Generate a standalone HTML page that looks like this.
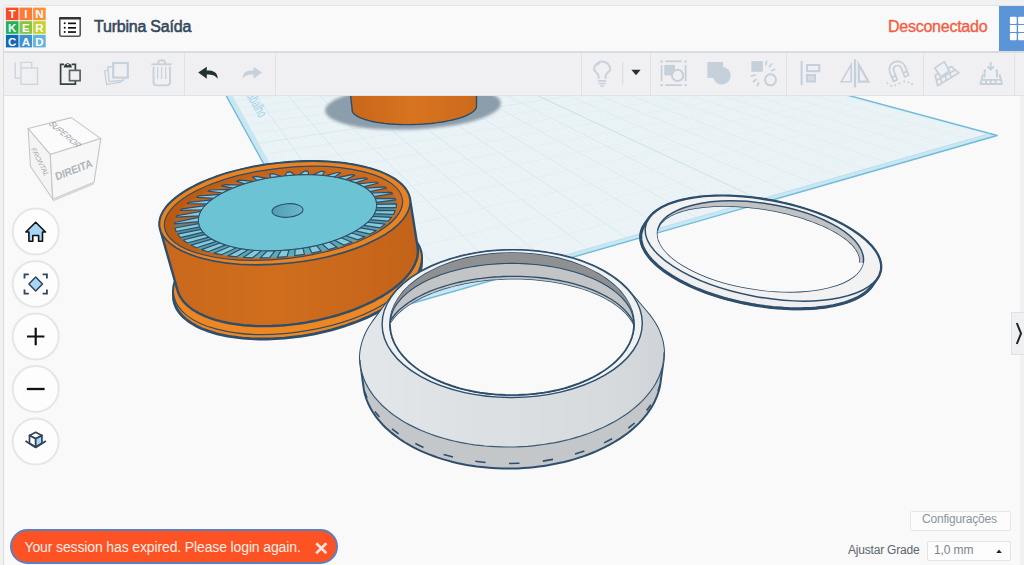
<!DOCTYPE html>
<html><head><meta charset="utf-8">
<style>
*{margin:0;padding:0;box-sizing:border-box}
html,body{width:1024px;height:565px;overflow:hidden;background:#f1f1f1;font-family:"Liberation Sans",sans-serif;position:relative}
.abs{position:absolute}
#canvas{position:absolute;left:3px;top:95px;width:1021px;height:470px;background:#f9f9f9;border-left:1px solid #dcdcdc}
#header{position:absolute;left:3px;top:5px;width:1021px;height:48px;background:#f9f9f9;border-left:1px solid #dcdcdc;border-top:1px solid #e3e3e3;border-bottom:2px solid #d9dce1;border-top-left-radius:5px}
#toolbar{position:absolute;left:3px;top:53px;width:1021px;height:43px;background:#f0f0f2;border-left:1px solid #dcdcdc;border-bottom:1px solid #dfe4e8}
.logo div{position:absolute;width:13px;height:13px;color:#fff;font-weight:bold;font-size:12px;line-height:14px;text-align:center}
#title{position:absolute;left:94px;top:18px;font-size:16px;font-weight:normal;color:#34485c;letter-spacing:-0.22px;white-space:nowrap;-webkit-text-stroke:0.55px #34485c}
#disc{position:absolute;left:888px;top:18px;font-size:16px;color:#f45d45;letter-spacing:-0.25px;white-space:nowrap;-webkit-text-stroke:0.35px #f45d45}
#blue{position:absolute;left:999px;top:6px;width:25px;height:45px;background:#5b95d8}
.dv{position:absolute;top:53px;width:1px;height:42px;background:#dde2e7}
.navbtn{position:absolute;left:12px;width:48px;height:48px;border-radius:50%;background:#fcfcfc;border:2px solid #e7e7e7}
</style></head>
<body>
<div id="canvas"></div>
<div id="header"></div>
<div id="toolbar"></div>
<svg class="abs" style="left:0;top:0" width="50" height="52" viewBox="0 0 50 52">
 <g>
  <rect x="5.9" y="7.6" width="12.6" height="12.6" fill="#fb4a25"/>
  <rect x="19.5" y="7.6" width="12.6" height="12.6" fill="#fd7b38"/>
  <rect x="33.1" y="7.6" width="12.6" height="12.6" fill="#fe8f3c"/>
  <rect x="5.9" y="21.2" width="12.6" height="12.6" fill="#21b25a"/>
  <rect x="19.5" y="21.2" width="12.6" height="12.6" fill="#87c540"/>
  <rect x="33.1" y="21.2" width="12.6" height="12.6" fill="#c4d22e"/>
  <rect x="5.9" y="34.8" width="12.6" height="12.6" fill="#0f6ab6"/>
  <rect x="19.5" y="34.8" width="12.6" height="12.6" fill="#3e92cf"/>
  <rect x="33.1" y="34.8" width="12.6" height="12.6" fill="#64b4e0"/>
 </g>
 <g fill="#fff" font-family="Liberation Sans" font-weight="bold" font-size="11.5" text-anchor="middle">
  <text x="12.2" y="18.3">T</text><text x="25.8" y="18.3">I</text><text x="39.4" y="18.3">N</text>
  <text x="12.2" y="31.9">K</text><text x="25.8" y="31.9">E</text><text x="39.4" y="31.9">R</text>
  <text x="12.2" y="45.5">C</text><text x="25.8" y="45.5">A</text><text x="39.4" y="45.5">D</text>
 </g>
</svg>
<svg class="abs" style="left:58px;top:16px" width="24" height="22" viewBox="0 0 24 22">
  <rect x="1.8" y="1.8" width="20.4" height="18.4" rx="1.5" fill="#fff" stroke="#555" stroke-width="1.6"/>
  <rect x="1" y="1" width="22" height="2.4" rx="1" fill="#333"/>
  <circle cx="6.7" cy="7.3" r="1" fill="#111"/><circle cx="6.7" cy="11.8" r="1" fill="#111"/><circle cx="6.7" cy="16" r="1" fill="#111"/>
  <rect x="10" y="6.5" width="8" height="1.7" fill="#111"/><rect x="10" y="11" width="8" height="1.7" fill="#111"/><rect x="10" y="15.2" width="8" height="1.7" fill="#111"/>
</svg>
<div id="title">Turbina Saída</div>
<div id="disc">Desconectado</div>
<div id="blue"></div>
<svg class="abs" style="left:1008px;top:15px" width="16" height="27" viewBox="1008 15 16 27"><g fill="#fff">
 <rect x="1009.9" y="16.8" width="6.8" height="7.2" rx="1"/><rect x="1018.1" y="16.8" width="6.8" height="7.2" rx="1"/>
 <rect x="1009.9" y="24.9" width="6.8" height="7" rx="0.6"/><rect x="1018.1" y="24.9" width="6.8" height="7" rx="0.6"/>
 <rect x="1009.9" y="32.9" width="6.8" height="7.3" rx="1"/><rect x="1018.1" y="32.9" width="6.8" height="7.3" rx="1"/>
</g></svg>


<svg id="scenesvg" class="abs" style="left:0;top:0" width="1024" height="565" viewBox="0 0 1024 565"><defs></defs><g clip-path="url(#canvasclip)"><clipPath id="canvasclip"><rect x="4" y="96" width="1016" height="469"/></clipPath><path d="M206.5,60.0 L350.2,321.0 L997.2,135.5 L717.0,60.0Z" fill="#c9e6f2"/>
<path d="M213.0,60.0 L353.8,315.8 L989.6,133.5 L717.0,60.0Z" fill="#ebf3f6"/>
<clipPath id="wpc"><path d="M213.0,60.0 L353.8,315.8 L989.6,133.5 L717.0,60.0Z"/></clipPath>
<linearGradient id="gfade" gradientUnits="userSpaceOnUse" x1="420" y1="300" x2="880" y2="40"><stop offset="0" stop-color="#fff"/><stop offset="1" stop-color="#555"/></linearGradient><mask id="gmask" maskUnits="userSpaceOnUse" x="0" y="0" width="1024" height="565"><rect x="0" y="0" width="1024" height="565" fill="url(#gfade)"/></mask>
<g clip-path="url(#wpc)" mask="url(#gmask)" fill="none"><path d="M351.1,311.1 L988.6,133.2 M347.8,305.3 L981.7,131.3 M344.7,299.6 L975.0,129.5 M338.6,288.8 L961.8,126.0 M335.6,283.7 L955.3,124.2 M332.8,278.6 L949.0,122.5 M330.0,273.7 L942.7,120.8 M324.6,264.2 L930.5,117.6 M322.1,259.7 L924.5,115.9 M319.5,255.2 L918.7,114.4 M317.1,250.9 L912.9,112.8 M312.4,242.6 L901.5,109.7 M310.1,238.5 L895.9,108.3 M307.9,234.6 L890.5,106.8 M305.7,230.7 L885.0,105.3 M301.5,223.3 L874.5,102.5 M299.4,219.7 L869.3,101.1 M297.5,216.2 L864.2,99.7 M295.5,212.8 L859.1,98.4 M291.7,206.1 L849.2,95.7 M289.9,202.9 L844.4,94.4 M288.1,199.7 L839.6,93.1 M286.4,196.6 L834.9,91.8 M283.0,190.6 L825.6,89.3 M281.3,187.7 L821.1,88.1 M279.7,184.9 L816.6,86.9 M278.1,182.1 L812.2,85.7 M275.1,176.6 L803.5,83.4 M273.6,174.0 L799.3,82.2 M272.1,171.4 L795.1,81.1 M270.7,168.9 L790.9,80.0 M267.9,163.9 L782.7,77.8 M266.5,161.5 L778.7,76.7 M265.2,159.2 L774.8,75.7 M263.9,156.8 L770.9,74.6 M261.3,152.3 L763.2,72.5 M260.1,150.1 L759.4,71.5 M258.8,148.0 L755.7,70.5 M257.6,145.8 L752.0,69.5 M255.3,141.7 L744.7,67.6 M254.2,139.7 L741.2,66.6 M253.0,137.7 L737.7,65.7 M251.9,135.7 L734.2,64.7 M249.8,131.9 L727.3,62.9 M248.7,130.1 L724.0,62.0 M247.7,128.2 L720.6,61.1 M246.7,126.4 L717.3,60.2 M244.7,122.9 L710.8,58.5 M243.7,121.2 L707.7,57.6 M242.7,119.5 L704.5,56.8 M241.8,117.8 L701.4,55.9 M240.0,114.6 L695.2,54.3 M239.1,113.0 L692.2,53.5 M238.2,111.4 L689.2,52.7 M237.3,109.9 L686.3,51.9 M235.6,106.8 L680.4,50.3 M234.7,105.3 L677.6,49.5 M233.9,103.9 L674.7,48.8 M233.1,102.4 L671.9,48.0 M231.5,99.6 L666.4,46.5 M230.7,98.2 L663.6,45.8 M230.0,96.9 L660.9,45.0 M229.2,95.5 L658.3,44.3 M227.7,92.9 L653.0,42.9 M227.0,91.6 L650.4,42.2 M226.2,90.3 L647.8,41.5 M225.5,89.1 L645.3,40.8 M224.1,86.6 L640.2,39.5 M223.5,85.4 L637.8,38.8 M222.8,84.2 L635.3,38.2 M222.1,83.0 L632.9,37.5 M220.8,80.7 L628.1,36.2 M220.2,79.6 L625.7,35.6 M219.5,78.5 L623.4,34.9 M218.9,77.4 L621.1,34.3 M217.7,75.2 L616.5,33.1 M217.1,74.1 L614.2,32.5 M216.5,73.1 L612.0,31.9 M215.9,72.0 L609.8,31.3" stroke="#e8f2f5" stroke-width="0.4"/><path d="M357.3,314.8 L216.2,69.6 M368.7,311.6 L221.3,69.1 M379.9,308.4 L226.5,68.6 M390.9,305.3 L231.6,68.1 M412.5,299.2 L241.6,67.0 M423.0,296.2 L246.6,66.5 M433.4,293.3 L251.6,66.0 M443.6,290.4 L256.5,65.5 M463.6,284.7 L266.3,64.5 M473.4,282.0 L271.1,64.0 M483.0,279.2 L275.9,63.5 M492.5,276.6 L280.7,63.0 M511.1,271.3 L290.2,62.1 M520.2,268.7 L294.9,61.6 M529.2,266.2 L299.5,61.1 M538.0,263.7 L304.2,60.7 M555.3,258.8 L313.3,59.7 M563.8,256.4 L317.9,59.3 M572.1,254.0 L322.4,58.8 M580.4,251.7 L326.9,58.3 M596.6,247.1 L335.8,57.4 M604.5,244.9 L340.2,57.0 M612.3,242.7 L344.6,56.5 M620.0,240.5 L348.9,56.1 M635.1,236.2 L357.6,55.2 M642.6,234.1 L361.8,54.8 M649.9,232.1 L366.1,54.3 M657.1,230.0 L370.3,53.9 M671.3,226.0 L378.7,53.1 M678.3,224.0 L382.8,52.6 M685.2,222.1 L387.0,52.2 M692.0,220.2 L391.1,51.8 M705.3,216.4 L399.2,51.0 M711.8,214.5 L403.2,50.6 M718.3,212.7 L407.3,50.1 M724.7,210.9 L411.2,49.7 M737.3,207.3 L419.1,48.9 M743.5,205.6 L423.1,48.5 M749.6,203.9 L427.0,48.1 M755.6,202.2 L430.8,47.7 M767.4,198.8 L438.5,47.0 M773.3,197.2 L442.3,46.6 M779.0,195.5 L446.1,46.2 M784.7,193.9 L449.9,45.8 M795.9,190.7 L457.3,45.0 M801.4,189.2 L461.0,44.7 M806.9,187.7 L464.7,44.3 M812.2,186.1 L468.4,43.9 M822.8,183.1 L475.7,43.2 M828.1,181.7 L479.3,42.8 M833.2,180.2 L482.8,42.4 M838.3,178.8 L486.4,42.1 M848.4,175.9 L493.5,41.4 M853.3,174.5 L497.0,41.0 M858.2,173.1 L500.5,40.6 M863.0,171.8 L503.9,40.3 M872.6,169.1 L510.8,39.6 M877.3,167.7 L514.2,39.2 M881.9,166.4 L517.6,38.9 M886.5,165.1 L521.0,38.6 M895.6,162.6 L527.7,37.9 M900.0,161.3 L531.0,37.5 M904.5,160.0 L534.3,37.2 M908.8,158.8 L537.6,36.9 M917.4,156.4 L544.2,36.2 M921.7,155.2 L547.4,35.9 M925.9,154.0 L550.6,35.5 M930.1,152.8 L553.8,35.2 M938.3,150.5 L560.2,34.6 M942.3,149.3 L563.3,34.2 M946.3,148.2 L566.5,33.9 M950.3,147.1 L569.6,33.6 M958.1,144.9 L575.8,33.0 M962.0,143.8 L578.9,32.7 M965.8,142.7 L581.9,32.3 M969.6,141.6 L585.0,32.0 M977.1,139.5 L591.0,31.4 M980.8,138.5 L594.0,31.1 M984.4,137.4 L597.0,30.8 M988.1,136.4 L600.0,30.5" stroke="#e2eff4" stroke-width="0.5"/><path d="M341.6,294.2 L968.3,127.7 M327.3,268.9 L936.6,119.2 M314.7,246.7 L907.1,111.3 M303.6,227.0 L879.7,103.9 M293.6,209.4 L854.1,97.0 M284.7,193.6 L830.2,90.6 M276.6,179.3 L807.8,84.6 M269.3,166.4 L786.8,78.9 M262.6,154.6 L767.0,73.6 M250.8,133.8 L730.7,63.8 M245.7,124.7 L714.1,59.3 M240.9,116.2 L698.3,55.1 M236.4,108.3 L683.3,51.1 M232.3,101.0 L669.1,47.2 M228.4,94.2 L655.6,43.6 M224.8,87.8 L642.7,40.1 M221.5,81.9 L630.5,36.9 M218.3,76.3 L618.8,33.7 M215.3,71.0 L607.6,30.7" stroke="#dcecf2" stroke-width="0.7"/><path d="M401.8,302.2 L236.6,67.5 M453.7,287.5 L261.4,65.0 M501.9,273.9 L285.5,62.6 M546.7,261.2 L308.8,60.2 M588.5,249.4 L331.3,57.9 M627.6,238.4 L353.3,55.7 M664.3,228.0 L374.5,53.5 M698.7,218.3 L395.2,51.4 M731.0,209.1 L415.2,49.3 M790.3,192.3 L453.6,45.4 M817.6,184.6 L472.0,43.5 M843.4,177.3 L490.0,41.7 M867.8,170.4 L507.4,39.9 M891.1,163.8 L524.4,38.2 M913.2,157.6 L540.9,36.5 M934.2,151.6 L557.0,34.9 M954.2,146.0 L572.7,33.3 M973.4,140.6 L588.0,31.7 M991.7,135.4 L602.9,30.2" stroke="#d0e6ee" stroke-width="0.9"/><path d="M256.5,143.7 L748.3,68.6" stroke="#d2e8f0" stroke-width="0.8"/><path d="M761.5,200.5 L434.7,47.4" stroke="#bcdce8" stroke-width="1.1"/></g>
<text font-family="Liberation Sans" font-size="12" fill="#a6d5e8" text-anchor="end" transform="translate(259,118.5) rotate(61.2) scale(0.72,1.2)">Plano de trabalho</text>
<path d="M206.5,60.0 L350.2,321.0 L997.2,135.5 L717.0,60.0" fill="none" stroke="#6dbbdd" stroke-width="1.4" stroke-linejoin="round"/>
<path d="M353.8,315.8 L989.6,133.5" fill="none" stroke="#b4dcec" stroke-width="0.8"/>
<filter id="blur1" x="-20%" y="-50%" width="140%" height="200%"><feGaussianBlur stdDeviation="1.6"/></filter>
<ellipse cx="413" cy="107" rx="88" ry="22.5" transform="rotate(-2.5 413 107)" fill="#8c9dab" filter="url(#blur1)"/>
<linearGradient id="og" x1="0" x2="1" y1="0" y2="0"><stop offset="0" stop-color="#c8661b"/><stop offset="0.5" stop-color="#d8741f"/><stop offset="1" stop-color="#cc6a1c"/></linearGradient>
<path d="M350,90 L352.2,110.0 L352.1,110.0 L352.2,110.8 L352.5,111.7 L353.0,112.6 L353.6,113.4 L354.5,114.2 L355.4,115.0 L356.6,115.8 L357.9,116.6 L359.4,117.3 L361.0,118.1 L362.8,118.7 L364.7,119.4 L366.8,120.0 L369.0,120.6 L371.3,121.2 L373.8,121.7 L376.3,122.2 L379.0,122.6 L381.8,123.0 L384.6,123.4 L387.6,123.7 L390.6,124.0 L393.7,124.2 L396.8,124.4 L400.0,124.5 L403.3,124.6 L406.6,124.6 L409.9,124.6 L413.2,124.5 L416.5,124.4 L419.8,124.3 L423.1,124.1 L426.3,123.8 L429.6,123.6 L432.7,123.2 L435.9,122.9 L439.0,122.4 L442.0,122.0 L444.9,121.5 L447.7,120.9 L450.5,120.4 L453.1,119.8 L455.6,119.1 L458.0,118.5 L460.3,117.8 L462.5,117.0 L464.5,116.3 L466.4,115.5 L468.1,114.7 L469.7,113.9 L471.1,113.0 L472.4,112.2 L473.5,111.3 L474.4,110.5 L475.2,109.6 L475.8,108.7 L476.2,107.8 L476.4,106.9 L476.5,106.0 L476.5,90 Z" fill="url(#og)" stroke="#2c4d69" stroke-width="1.4"/>
<clipPath id="sr_c"><path d="M658.3,231.0 L658.5,229.7 L658.9,228.4 L659.4,227.2 L660.1,226.0 L660.8,224.8 L661.7,223.6 L662.7,222.5 L663.9,221.4 L665.1,220.3 L666.5,219.3 L667.9,218.2 L669.5,217.3 L671.2,216.3 L673.0,215.4 L674.9,214.6 L677.0,213.8 L679.1,213.0 L681.3,212.2 L683.6,211.6 L686.0,210.9 L688.5,210.3 L691.1,209.7 L693.8,209.2 L696.5,208.8 L699.4,208.4 L702.3,208.0 L705.2,207.7 L708.3,207.4 L711.4,207.2 L714.5,207.0 L717.8,206.9 L721.0,206.8 L724.3,206.8 L727.7,206.8 L731.1,206.9 L734.5,207.0 L738.0,207.2 L741.5,207.4 L745.0,207.7 L748.5,208.0 L752.0,208.4 L755.6,208.8 L759.1,209.3 L762.7,209.8 L766.2,210.3 L769.7,211.0 L773.3,211.6 L776.8,212.3 L780.2,213.0 L783.7,213.8 L787.1,214.6 L790.5,215.5 L793.8,216.4 L797.1,217.3 L800.4,218.3 L803.6,219.3 L806.7,220.4 L809.8,221.5 L812.8,222.6 L815.8,223.7 L818.7,224.9 L821.5,226.1 L824.2,227.3 L826.9,228.5 L829.4,229.8 L831.9,231.1 L834.3,232.4 L836.6,233.7 L838.7,235.1 L840.8,236.5 L842.8,237.8 L844.7,239.2 L846.5,240.6 L848.2,242.0 L849.7,243.4 L851.2,244.8 L852.5,246.2 L853.7,247.7 L854.8,249.1 L855.8,250.5 L856.6,251.9 L857.3,253.3 L857.9,254.7 L858.4,256.1 L858.8,257.5 L859.0,258.8 L859.1,260.2 L859.1,261.5 L858.9,262.8 L958.9,262.8 L958.9,400.0 L558.3,400.0 L558.3,231.0Z"/></clipPath>
<mask id="sr_m" maskUnits="userSpaceOnUse" x="0" y="0" width="1024" height="565"><path d="M640.7,237.4 L640.7,235.6 L640.9,233.9 L641.2,232.2 L641.7,230.5 L642.3,228.8 L643.0,227.2 L644.0,225.6 L645.0,224.0 L649.4,217.8 L650.6,216.3 L651.9,214.9 L653.4,213.5 L654.9,212.1 L656.6,210.8 L658.5,209.6 L660.5,208.3 L662.5,207.2 L664.8,206.1 L667.1,205.0 L669.6,204.0 L672.1,203.1 L674.8,202.2 L677.6,201.3 L680.5,200.6 L683.5,199.8 L686.6,199.2 L689.8,198.6 L693.1,198.0 L696.5,197.6 L700.0,197.1 L703.5,196.8 L707.1,196.5 L710.8,196.3 L714.5,196.1 L718.3,196.0 L722.1,196.0 L726.0,196.0 L730.0,196.1 L734.0,196.3 L738.0,196.5 L742.1,196.8 L746.1,197.2 L750.2,197.6 L754.4,198.1 L758.5,198.6 L762.6,199.2 L766.8,199.9 L770.9,200.6 L775.0,201.4 L779.1,202.3 L783.2,203.2 L787.3,204.1 L791.3,205.1 L795.3,206.2 L799.2,207.3 L803.1,208.5 L807.0,209.7 L810.8,211.0 L814.6,212.3 L818.3,213.6 L821.9,215.0 L825.4,216.5 L828.9,218.0 L832.3,219.5 L835.6,221.0 L838.8,222.6 L841.9,224.2 L844.9,225.9 L847.9,227.6 L850.7,229.3 L853.4,231.0 L856.0,232.7 L858.5,234.5 L860.8,236.3 L863.0,238.1 L865.2,239.9 L867.2,241.7 L869.0,243.6 L870.8,245.4 L872.4,247.2 L873.8,249.1 L875.2,250.9 L876.4,252.8 L877.4,254.6 L878.3,256.4 L879.1,258.2 L879.7,260.0 L880.2,261.8 L880.5,263.6 L880.8,265.4 L880.8,267.1 L880.7,268.8 L880.5,270.5 L880.1,272.1 L879.5,273.8 L878.9,275.4 L878.1,276.9 L877.1,278.5 L872.5,285.2 L871.4,286.8 L870.2,288.3 L868.8,289.7 L867.3,291.2 L865.6,292.5 L863.9,293.9 L861.9,295.2 L859.9,296.4 L857.7,297.6 L855.4,298.7 L853.0,299.8 L850.5,300.8 L847.9,301.8 L845.1,302.7 L842.2,303.5 L839.3,304.3 L836.2,305.0 L833.1,305.7 L829.8,306.3 L826.5,306.9 L823.1,307.3 L819.6,307.7 L816.0,308.1 L812.4,308.4 L808.6,308.6 L804.9,308.7 L801.0,308.8 L797.2,308.8 L793.2,308.8 L789.3,308.7 L785.2,308.5 L781.2,308.2 L777.1,307.9 L773.0,307.6 L768.9,307.1 L764.8,306.6 L760.7,306.0 L756.5,305.4 L752.4,304.7 L748.3,303.9 L744.2,303.1 L740.1,302.3 L736.0,301.3 L732.0,300.3 L727.9,299.3 L724.0,298.2 L720.0,297.0 L716.1,295.8 L712.3,294.6 L708.5,293.3 L704.8,291.9 L701.2,290.5 L697.6,289.1 L694.1,287.6 L690.7,286.1 L687.3,284.5 L684.1,282.9 L680.9,281.3 L677.9,279.6 L674.9,277.9 L672.0,276.2 L669.3,274.4 L666.6,272.6 L664.1,270.9 L661.7,269.0 L659.4,267.2 L657.2,265.4 L655.2,263.5 L653.2,261.6 L651.5,259.8 L649.8,257.9 L648.3,256.0 L646.9,254.1 L645.6,252.2 L644.5,250.3 L643.5,248.4 L642.7,246.6 L642.0,244.7 L641.5,242.9 L641.0,241.0 L640.8,239.2Z" fill="#fff" stroke="#fff" stroke-width="4"/><g clip-path="url(#sr_c)"><ellipse cx="760.5" cy="246.4" rx="104.0" ry="43.2" transform="rotate(8.60 760.5 246.4)" fill='#000'/></g></mask>
<g mask="url(#sr_m)">
<path d="M640.7,237.4 L640.7,235.6 L640.9,233.9 L641.2,232.2 L641.7,230.5 L642.3,228.8 L643.0,227.2 L644.0,225.6 L645.0,224.0 L649.4,217.8 L650.6,216.3 L651.9,214.9 L653.4,213.5 L654.9,212.1 L656.6,210.8 L658.5,209.6 L660.5,208.3 L662.5,207.2 L664.8,206.1 L667.1,205.0 L669.6,204.0 L672.1,203.1 L674.8,202.2 L677.6,201.3 L680.5,200.6 L683.5,199.8 L686.6,199.2 L689.8,198.6 L693.1,198.0 L696.5,197.6 L700.0,197.1 L703.5,196.8 L707.1,196.5 L710.8,196.3 L714.5,196.1 L718.3,196.0 L722.1,196.0 L726.0,196.0 L730.0,196.1 L734.0,196.3 L738.0,196.5 L742.1,196.8 L746.1,197.2 L750.2,197.6 L754.4,198.1 L758.5,198.6 L762.6,199.2 L766.8,199.9 L770.9,200.6 L775.0,201.4 L779.1,202.3 L783.2,203.2 L787.3,204.1 L791.3,205.1 L795.3,206.2 L799.2,207.3 L803.1,208.5 L807.0,209.7 L810.8,211.0 L814.6,212.3 L818.3,213.6 L821.9,215.0 L825.4,216.5 L828.9,218.0 L832.3,219.5 L835.6,221.0 L838.8,222.6 L841.9,224.2 L844.9,225.9 L847.9,227.6 L850.7,229.3 L853.4,231.0 L856.0,232.7 L858.5,234.5 L860.8,236.3 L863.0,238.1 L865.2,239.9 L867.2,241.7 L869.0,243.6 L870.8,245.4 L872.4,247.2 L873.8,249.1 L875.2,250.9 L876.4,252.8 L877.4,254.6 L878.3,256.4 L879.1,258.2 L879.7,260.0 L880.2,261.8 L880.5,263.6 L880.8,265.4 L880.8,267.1 L880.7,268.8 L880.5,270.5 L880.1,272.1 L879.5,273.8 L878.9,275.4 L878.1,276.9 L877.1,278.5 L872.5,285.2 L871.4,286.8 L870.2,288.3 L868.8,289.7 L867.3,291.2 L865.6,292.5 L863.9,293.9 L861.9,295.2 L859.9,296.4 L857.7,297.6 L855.4,298.7 L853.0,299.8 L850.5,300.8 L847.9,301.8 L845.1,302.7 L842.2,303.5 L839.3,304.3 L836.2,305.0 L833.1,305.7 L829.8,306.3 L826.5,306.9 L823.1,307.3 L819.6,307.7 L816.0,308.1 L812.4,308.4 L808.6,308.6 L804.9,308.7 L801.0,308.8 L797.2,308.8 L793.2,308.8 L789.3,308.7 L785.2,308.5 L781.2,308.2 L777.1,307.9 L773.0,307.6 L768.9,307.1 L764.8,306.6 L760.7,306.0 L756.5,305.4 L752.4,304.7 L748.3,303.9 L744.2,303.1 L740.1,302.3 L736.0,301.3 L732.0,300.3 L727.9,299.3 L724.0,298.2 L720.0,297.0 L716.1,295.8 L712.3,294.6 L708.5,293.3 L704.8,291.9 L701.2,290.5 L697.6,289.1 L694.1,287.6 L690.7,286.1 L687.3,284.5 L684.1,282.9 L680.9,281.3 L677.9,279.6 L674.9,277.9 L672.0,276.2 L669.3,274.4 L666.6,272.6 L664.1,270.9 L661.7,269.0 L659.4,267.2 L657.2,265.4 L655.2,263.5 L653.2,261.6 L651.5,259.8 L649.8,257.9 L648.3,256.0 L646.9,254.1 L645.6,252.2 L644.5,250.3 L643.5,248.4 L642.7,246.6 L642.0,244.7 L641.5,242.9 L641.0,241.0 L640.8,239.2Z" fill="#efefef" stroke="#2d4e6c" stroke-width="3.2"/>
<ellipse cx="763.0" cy="248.5" rx="119.5" ry="48.5" transform="rotate(10.60 763.0 248.5)" fill="#f2f2f2" stroke="#2d4e6c" stroke-width="1.5"/>
<ellipse cx="760.5" cy="246.4" rx="104.0" ry="43.2" transform="rotate(8.60 760.5 246.4)" fill="#c2c2c3" stroke="#2d4e6c" stroke-width="1.5"/>
<path d="M658.3,231.0 L658.5,229.7 L658.9,228.4 L659.4,227.2 L660.1,226.0 L660.8,224.8 L661.7,223.6 L662.7,222.5 L663.9,221.4 L665.1,220.3 L666.5,219.3 L667.9,218.2 L669.5,217.3 L671.2,216.3 L673.0,215.4 L674.9,214.6 L677.0,213.8 L679.1,213.0 L681.3,212.2 L683.6,211.6 L686.0,210.9 L688.5,210.3 L691.1,209.7 L693.8,209.2 L696.5,208.8 L699.4,208.4 L702.3,208.0 L705.2,207.7 L708.3,207.4 L711.4,207.2 L714.5,207.0 L717.8,206.9 L721.0,206.8 L724.3,206.8 L727.7,206.8 L731.1,206.9 L734.5,207.0 L738.0,207.2 L741.5,207.4 L745.0,207.7 L748.5,208.0 L752.0,208.4 L755.6,208.8 L759.1,209.3 L762.7,209.8 L766.2,210.3 L769.7,211.0 L773.3,211.6 L776.8,212.3 L780.2,213.0 L783.7,213.8 L787.1,214.6 L790.5,215.5 L793.8,216.4 L797.1,217.3 L800.4,218.3 L803.6,219.3 L806.7,220.4 L809.8,221.5 L812.8,222.6 L815.8,223.7 L818.7,224.9 L821.5,226.1 L824.2,227.3 L826.9,228.5 L829.4,229.8 L831.9,231.1 L834.3,232.4 L836.6,233.7 L838.7,235.1 L840.8,236.5 L842.8,237.8 L844.7,239.2 L846.5,240.6 L848.2,242.0 L849.7,243.4 L851.2,244.8 L852.5,246.2 L853.7,247.7 L854.8,249.1 L855.8,250.5 L856.6,251.9 L857.3,253.3 L857.9,254.7 L858.4,256.1 L858.8,257.5 L859.0,258.8 L859.1,260.2 L859.1,261.5 L858.9,262.8" fill="none" stroke="#2d4e6c" stroke-width="1.5"/>
</g>
<path d="M173.4,290.6 L173.6,288.6 L173.8,286.5 L174.2,284.5 L174.8,282.4 L175.6,280.3 L176.4,278.2 L177.5,276.1 L178.6,274.0 L180.0,271.9 L181.4,269.8 L183.0,267.7 L184.8,265.6 L186.7,263.5 L188.7,261.4 L190.9,259.4 L193.2,257.4 L195.6,255.4 L198.1,253.4 L200.8,251.4 L203.6,249.5 L206.5,247.6 L209.5,245.7 L212.6,243.9 L215.9,242.1 L219.2,240.3 L222.6,238.6 L226.1,237.0 L229.7,235.3 L233.4,233.8 L237.2,232.2 L241.0,230.8 L245.0,229.4 L248.9,228.0 L253.0,226.7 L257.1,225.4 L261.2,224.3 L265.4,223.1 L269.6,222.1 L273.9,221.1 L278.2,220.2 L282.5,219.3 L286.8,218.5 L291.2,217.8 L295.5,217.1 L299.9,216.5 L304.2,216.0 L308.6,215.6 L312.9,215.2 L317.2,214.9 L321.5,214.7 L325.8,214.6 L330.0,214.5 L334.1,214.5 L338.3,214.6 L342.4,214.7 L346.4,214.9 L350.4,215.2 L354.3,215.6 L358.1,216.0 L361.9,216.5 L365.6,217.1 L369.2,217.8 L372.7,218.5 L376.1,219.3 L379.4,220.2 L382.6,221.1 L385.8,222.1 L388.8,223.1 L391.6,224.2 L394.4,225.4 L397.1,226.7 L399.6,228.0 L402.0,229.3 L404.3,230.8 L406.5,232.2 L408.5,233.8 L410.4,235.3 L412.1,236.9 L413.7,238.6 L415.1,240.3 L416.5,242.1 L417.6,243.9 L418.6,245.7 L419.5,247.6 L420.2,249.5 L420.8,251.4 L421.2,253.3 L421.5,255.3 L421.6,257.4 L421.6,261.9 L421.5,263.9 L421.3,265.9 L421.0,268.0 L420.5,270.1 L419.8,272.2 L419.0,274.2 L418.1,276.4 L417.0,278.5 L415.7,280.6 L414.3,282.7 L412.8,284.8 L411.1,286.9 L409.3,288.9 L407.3,291.0 L405.2,293.1 L403.0,295.1 L400.6,297.1 L398.2,299.1 L395.6,301.1 L392.8,303.1 L390.0,305.0 L387.0,306.9 L383.9,308.7 L380.8,310.5 L377.5,312.3 L374.1,314.0 L370.6,315.7 L367.1,317.4 L363.4,318.9 L359.7,320.5 L355.9,322.0 L352.0,323.4 L348.1,324.8 L344.1,326.2 L340.0,327.4 L335.9,328.6 L331.7,329.8 L327.5,330.9 L323.3,331.9 L319.0,332.9 L314.7,333.8 L310.4,334.6 L306.0,335.4 L301.7,336.1 L297.3,336.7 L293.0,337.2 L288.6,337.7 L284.3,338.1 L279.9,338.4 L275.6,338.7 L271.4,338.9 L267.1,339.0 L262.9,339.0 L258.8,339.0 L254.7,338.9 L250.6,338.7 L246.6,338.4 L242.7,338.1 L238.8,337.7 L235.0,337.2 L231.3,336.7 L227.6,336.1 L224.1,335.4 L220.6,334.6 L217.2,333.8 L214.0,332.9 L210.8,331.9 L207.7,330.9 L204.8,329.8 L201.9,328.7 L199.2,327.4 L196.6,326.2 L194.2,324.8 L191.8,323.4 L189.6,322.0 L187.5,320.5 L185.6,319.0 L183.8,317.4 L182.1,315.7 L180.6,314.0 L179.2,312.3 L177.9,310.5 L176.8,308.7 L175.9,306.9 L175.1,305.0 L174.5,303.1 L174.0,301.1 L173.6,299.2 L173.5,297.2 L173.4,295.1Z" fill="#ee8722" stroke="#2d4e6c" stroke-width="2.8"/>
<ellipse cx="297.5" cy="274.5" rx="125.5" ry="57.0" transform="rotate(-9.70 297.5 274.5)" fill="#ee8722" stroke="#2d4e6c" stroke-width="1.2"/>
<linearGradient id="og2" x1="0" x2="1" y1="0" y2="0"><stop offset="0" stop-color="#c9681c"/><stop offset="0.45" stop-color="#d06e1d"/><stop offset="1" stop-color="#c3631a"/></linearGradient>
<path d="M159.5,223.5 L159.6,221.7 L159.9,219.9 L160.3,218.1 L160.9,216.3 L161.7,214.5 L162.5,212.7 L163.6,210.9 L164.8,209.1 L166.1,207.2 L167.6,205.4 L169.2,203.7 L171.0,201.9 L172.9,200.1 L174.9,198.4 L177.1,196.6 L179.4,194.9 L181.9,193.2 L184.5,191.6 L187.2,189.9 L190.0,188.3 L192.9,186.7 L196.0,185.2 L199.1,183.7 L202.4,182.2 L205.8,180.8 L209.2,179.4 L212.8,178.0 L216.4,176.7 L220.1,175.4 L223.9,174.2 L227.8,173.0 L231.8,171.9 L235.8,170.8 L239.9,169.8 L244.0,168.8 L248.2,167.9 L252.4,167.0 L256.7,166.2 L261.0,165.5 L265.3,164.8 L269.7,164.2 L274.1,163.6 L278.4,163.1 L282.8,162.7 L287.2,162.3 L291.6,161.9 L296.0,161.7 L300.4,161.5 L304.8,161.3 L309.1,161.3 L313.4,161.3 L317.6,161.3 L321.9,161.5 L326.1,161.7 L330.2,161.9 L334.2,162.2 L338.3,162.6 L342.2,163.0 L346.1,163.5 L349.9,164.1 L353.6,164.7 L357.2,165.4 L360.8,166.1 L364.2,166.9 L367.6,167.8 L370.8,168.7 L374.0,169.6 L377.0,170.7 L379.9,171.7 L382.7,172.8 L385.4,174.0 L388.0,175.2 L390.4,176.5 L392.7,177.8 L394.9,179.1 L396.9,180.5 L398.8,182.0 L400.6,183.4 L402.2,184.9 L403.6,186.5 L405.0,188.1 L406.1,189.7 L407.2,191.3 L408.0,193.0 L408.8,194.7 L409.3,196.4 L409.8,198.1 L417.6,246.8 L417.8,248.8 L417.9,250.8 L417.9,252.7 L417.7,254.7 L417.4,256.8 L416.9,258.8 L416.2,260.8 L415.4,262.9 L414.5,264.9 L413.5,267.0 L412.2,269.1 L410.9,271.1 L409.4,273.2 L407.8,275.2 L406.0,277.3 L404.1,279.3 L402.1,281.3 L399.9,283.3 L397.6,285.3 L395.2,287.2 L392.7,289.1 L390.0,291.1 L387.2,292.9 L384.4,294.8 L381.4,296.6 L378.3,298.3 L375.1,300.1 L371.8,301.8 L368.4,303.4 L365.0,305.0 L361.4,306.6 L357.8,308.1 L354.1,309.6 L350.4,311.0 L346.5,312.3 L342.6,313.6 L338.7,314.9 L334.7,316.0 L330.6,317.2 L326.5,318.2 L322.4,319.2 L318.2,320.2 L314.1,321.0 L309.9,321.8 L305.6,322.6 L301.4,323.2 L297.2,323.9 L292.9,324.4 L288.7,324.9 L284.5,325.2 L280.3,325.6 L276.1,325.8 L272.0,326.0 L267.9,326.1 L263.8,326.1 L259.7,326.1 L255.7,326.0 L251.8,325.8 L247.9,325.5 L244.0,325.2 L240.3,324.8 L236.6,324.3 L233.0,323.8 L229.4,323.2 L226.0,322.5 L222.6,321.8 L219.3,320.9 L216.1,320.1 L213.1,319.1 L210.1,318.1 L207.2,317.0 L204.4,315.9 L201.8,314.7 L199.3,313.5 L196.9,312.1 L194.6,310.8 L192.4,309.4 L190.4,307.9 L188.5,306.4 L186.8,304.8 L185.1,303.2 L183.6,301.6 L182.3,299.9 L181.1,298.1 L180.0,296.4 L179.1,294.5 L178.3,292.7 L177.7,290.8 L160.0,228.8 L159.7,227.0 L159.5,225.3Z" fill="url(#og2)" stroke="#2d4e6c" stroke-width="2.4"/>
<ellipse cx="284.8" cy="213.0" rx="125.9" ry="50.3" transform="rotate(-6.00 284.8 213.0)" fill="#ea831f" stroke="#2d4e6c" stroke-width="1.6"/>
<linearGradient id="oin" x1="0" x2="1" y1="0" y2="0.3"><stop offset="0" stop-color="#b4560f"/><stop offset="0.5" stop-color="#c8661b"/><stop offset="1" stop-color="#d06d1e"/></linearGradient>
<ellipse cx="283.5" cy="213.3" rx="119.8" ry="45.3" transform="rotate(-6.50 283.5 213.3)" fill="url(#oin)" stroke="#2d4e6c" stroke-width="1.2"/>
<linearGradient id="tring" x1="0" x2="0" y1="0" y2="1"><stop offset="0" stop-color="#c9671b"/><stop offset="0.4" stop-color="#bf6220"/><stop offset="0.55" stop-color="#4d8e9b"/><stop offset="1" stop-color="#5aaebd"/></linearGradient>
<ellipse cx="285.5" cy="214.5" rx="111.5" ry="42.0" transform="rotate(-6.00 285.5 214.5)" fill="url(#tring)"/>
<path d="M376.6,204.4 L376.4,207.7 L396.2,207.7 L396.5,203.9Z M375.7,210.3 L374.3,213.6 L393.5,214.4 L395.3,210.6Z M372.7,216.3 L370.1,219.6 L388.2,221.2 L391.5,217.4Z M367.6,222.1 L363.8,225.3 L380.4,227.8 L385.1,224.2Z M360.5,227.8 L355.7,230.8 L370.2,234.1 L376.2,230.7Z M351.6,233.0 L345.9,235.8 L357.9,239.9 L365.0,236.8Z M341.1,237.8 L334.7,240.2 L343.9,245.1 L352.0,242.3Z M329.3,242.0 L322.3,244.0 L328.4,249.6 L337.2,247.2Z M316.5,245.4 L309.0,247.0 L311.9,253.1 L321.2,251.2Z M303.0,248.1 L295.2,249.2 L294.7,255.7 L304.4,254.4Z M289.1,249.8 L281.2,250.4 L277.3,257.3 L287.0,256.6Z M275.1,250.7 L267.4,250.8 L260.1,257.9 L269.6,257.7Z M261.5,250.6 L254.1,250.2 L243.5,257.3 L252.7,257.8Z M248.5,249.6 L241.6,248.6 L227.9,255.8 L236.5,256.8Z M236.4,247.7 L230.2,246.2 L213.8,253.2 L221.5,254.7Z M225.6,244.9 L220.2,243.0 L201.4,249.6 L208.1,251.7Z M216.4,241.4 L211.9,239.1 L191.1,245.2 L196.6,247.8Z M208.8,237.1 L205.5,234.4 L183.2,240.0 L187.3,243.0Z M203.3,232.2 L201.0,229.3 L177.7,234.2 L180.4,237.6Z M199.8,226.9 L198.7,223.7 L174.9,228.0 L176.1,231.5Z M198.4,221.7 L198.7,217.4 L174.6,222.5 L174.5,223.9Z M199.1,215.8 L201.0,211.5 L176.8,215.7 L176.1,217.2Z M202.0,209.8 L205.3,205.6 L181.7,208.9 L180.4,210.4Z M206.9,203.9 L211.7,199.8 L189.1,202.3 L187.3,203.7Z M213.9,198.3 L220.0,194.4 L198.9,195.9 L196.6,197.3Z M222.6,193.0 L229.9,189.4 L210.8,190.0 L208.1,191.2Z M233.0,188.1 L241.3,185.0 L224.6,184.7 L221.5,185.8Z M244.7,183.9 L253.8,181.3 L239.8,180.2 L236.4,181.1Z M257.4,180.4 L267.1,178.4 L256.2,176.4 L252.6,177.2Z M270.9,177.7 L280.9,176.3 L273.3,173.7 L269.6,174.2Z M284.8,175.9 L294.9,175.1 L290.7,171.9 L287.0,172.2Z M298.8,174.9 L308.7,174.9 L308.0,171.2 L304.3,171.2Z M312.5,174.9 L322.0,175.5 L324.7,171.5 L321.2,171.3Z M325.5,175.9 L334.4,177.1 L340.5,172.9 L337.2,172.5Z M337.7,177.7 L345.7,179.6 L354.9,175.3 L351.9,174.7Z M348.6,180.4 L355.5,182.9 L367.6,178.7 L365.0,177.9Z M358.0,183.9 L363.7,186.9 L378.3,183.0 L376.1,182.0Z M365.6,188.1 L370.0,191.6 L386.6,188.0 L385.0,186.9Z M371.4,193.0 L374.2,196.7 L392.5,193.7 L391.5,192.4Z M375.0,198.3 L376.3,202.3 L395.8,199.9 L395.3,198.6Z" fill="#86cbd8" stroke="#2d4e6c" stroke-width="1.2" stroke-linejoin="round"/>
<ellipse cx="287.5" cy="212.8" rx="89.5" ry="37.0" transform="rotate(-6.00 287.5 212.8)" fill="#6cc3d3" stroke="#2d4e6c" stroke-width="1"/>
<linearGradient id="hole" x1="0" x2="1"><stop offset="0" stop-color="#4f9fb1"/><stop offset="1" stop-color="#6ab9c9"/></linearGradient>
<ellipse cx="287.5" cy="210.5" rx="15.5" ry="6.8" transform="rotate(-4.00 287.5 210.5)" fill="url(#hole)" stroke="#2d4e6c" stroke-width="1.1"/>
<clipPath id="gr_c"><path d="M385.1,341.6 L385.2,339.5 L385.4,337.3 L385.7,335.2 L386.2,333.1 L386.9,331.0 L387.7,328.9 L388.7,326.8 L389.8,324.7 L391.1,322.7 L392.6,320.7 L394.1,318.7 L395.8,316.7 L397.7,314.7 L399.7,312.8 L401.9,310.9 L404.1,309.1 L406.6,307.3 L409.1,305.5 L411.8,303.8 L414.6,302.1 L417.5,300.5 L420.5,298.9 L423.6,297.3 L426.9,295.9 L430.2,294.4 L433.7,293.1 L437.2,291.7 L440.9,290.5 L444.6,289.3 L448.4,288.2 L452.3,287.1 L456.3,286.1 L460.3,285.2 L464.4,284.3 L468.5,283.5 L472.7,282.8 L477.0,282.1 L481.3,281.6 L485.6,281.0 L490.0,280.6 L494.3,280.2 L498.8,280.0 L503.2,279.7 L507.6,279.6 L512.0,279.5 L516.5,279.5 L520.9,279.6 L525.3,279.8 L529.7,280.0 L534.1,280.3 L538.4,280.7 L542.7,281.2 L547.0,281.7 L551.2,282.3 L555.4,283.0 L559.5,283.7 L563.5,284.5 L567.5,285.4 L571.4,286.4 L575.3,287.4 L579.0,288.5 L582.7,289.6 L586.3,290.8 L589.8,292.1 L593.2,293.4 L596.5,294.8 L599.7,296.3 L602.7,297.7 L605.7,299.3 L608.5,300.9 L611.3,302.5 L613.8,304.2 L616.3,306.0 L618.6,307.8 L620.8,309.6 L622.9,311.4 L624.8,313.3 L626.6,315.3 L628.2,317.2 L629.7,319.2 L631.1,321.2 L632.3,323.2 L633.3,325.3 L634.2,327.4 L634.9,329.5 L635.5,331.6 L635.9,333.7 L636.2,335.8 L636.3,337.9 L696.3,337.9 L696.3,600.0 L325.1,600.0 L325.1,341.6Z"/></clipPath>
<clipPath id="gr_r1c"><ellipse cx="512.0" cy="324.0" rx="122.0" ry="71.0" transform="rotate(0.00 512.0 324.0)" /></clipPath>
<mask id="gr_m" maskUnits="userSpaceOnUse" x="0" y="0" width="1024" height="565"><path d="M360.0,358.1 L360.1,354.9 L360.4,351.7 L360.9,348.5 L361.6,345.4 L362.4,342.2 L363.5,339.0 L364.7,335.9 L366.1,332.8 L367.7,329.7 L369.4,326.7 L371.4,323.7 L373.5,320.7 L392.4,295.3 L394.3,293.0 L396.3,290.6 L398.4,288.3 L400.7,286.1 L403.1,283.9 L405.7,281.7 L408.4,279.6 L411.2,277.6 L414.1,275.6 L417.2,273.6 L420.3,271.8 L423.6,270.0 L427.0,268.2 L430.5,266.5 L434.1,264.9 L437.8,263.4 L441.6,261.9 L445.5,260.6 L449.5,259.3 L453.5,258.1 L457.6,256.9 L461.8,255.8 L466.0,254.9 L470.3,254.0 L474.7,253.2 L479.1,252.4 L483.5,251.8 L488.0,251.3 L492.5,250.8 L497.0,250.5 L501.6,250.2 L506.1,250.0 L510.7,249.9 L515.2,249.9 L519.8,250.0 L524.4,250.2 L528.9,250.4 L533.4,250.8 L537.9,251.3 L542.4,251.8 L546.8,252.4 L551.2,253.2 L555.5,253.9 L559.8,254.8 L564.0,255.8 L568.1,256.9 L572.2,258.0 L576.2,259.2 L580.2,260.5 L584.0,261.9 L587.8,263.4 L591.5,264.9 L595.0,266.5 L598.5,268.2 L601.9,269.9 L605.1,271.7 L608.3,273.6 L611.3,275.5 L614.2,277.5 L617.0,279.6 L619.6,281.7 L622.1,283.8 L624.5,286.0 L626.7,288.3 L628.8,290.6 L647.4,312.6 L649.8,315.4 L651.9,318.3 L653.9,321.2 L655.7,324.2 L657.4,327.2 L658.9,330.3 L660.1,333.4 L661.2,336.5 L662.1,339.6 L662.9,342.7 L663.4,345.9 L663.8,349.1 L664.0,352.3 L663.9,355.5 L663.7,358.7 L663.4,361.9 L660.4,383.4 L659.8,386.6 L659.1,389.8 L658.1,393.0 L657.0,396.1 L655.7,399.2 L654.3,402.3 L652.6,405.4 L650.8,408.4 L648.8,411.4 L646.7,414.3 L644.4,417.2 L641.9,420.1 L639.3,422.9 L636.5,425.6 L633.5,428.3 L630.4,430.9 L627.2,433.5 L623.8,435.9 L620.3,438.4 L616.6,440.7 L612.8,443.0 L608.9,445.1 L604.9,447.2 L600.7,449.2 L596.5,451.2 L592.1,453.0 L587.6,454.8 L583.1,456.4 L578.5,457.9 L573.8,459.4 L569.0,460.7 L564.1,462.0 L559.1,463.1 L554.2,464.1 L549.1,465.1 L544.0,465.9 L538.9,466.6 L533.8,467.2 L528.6,467.7 L523.4,468.1 L518.1,468.4 L512.9,468.5 L507.7,468.5 L502.5,468.5 L497.2,468.3 L492.1,468.0 L486.9,467.6 L481.8,467.1 L476.6,466.5 L471.6,465.7 L466.6,464.9 L461.6,463.9 L456.8,462.9 L451.9,461.7 L447.2,460.4 L442.5,459.1 L437.9,457.6 L433.4,456.0 L429.1,454.4 L424.8,452.6 L420.6,450.8 L416.5,448.8 L412.6,446.8 L408.7,444.7 L405.0,442.5 L401.4,440.2 L398.0,437.8 L394.7,435.4 L391.6,432.9 L388.6,430.3 L385.7,427.7 L383.0,425.0 L380.5,422.2 L378.1,419.4 L375.9,416.6 L373.9,413.7 L372.0,410.7 L370.3,407.7 L368.8,404.7 L367.4,401.6 L366.2,398.5 L365.2,395.4 L364.4,392.3 L363.8,389.1 L360.4,364.5 L360.1,361.3Z" fill="#fff" stroke="#fff" stroke-width="4"/><g clip-path="url(#gr_c)"><ellipse cx="512.0" cy="324.0" rx="122.0" ry="71.0" transform="rotate(0.00 512.0 324.0)" fill='#000'/></g></mask>
<linearGradient id="gg" x1="0" x2="1" y1="0" y2="0"><stop offset="0" stop-color="#e4e7ea"/><stop offset="0.4" stop-color="#dde0e3"/><stop offset="0.8" stop-color="#d8dbde"/><stop offset="1" stop-color="#d0d3d7"/></linearGradient>
<g mask="url(#gr_m)">
<path d="M360.0,358.1 L360.1,354.9 L360.4,351.7 L360.9,348.5 L361.6,345.4 L362.4,342.2 L363.5,339.0 L364.7,335.9 L366.1,332.8 L367.7,329.7 L369.4,326.7 L371.4,323.7 L373.5,320.7 L392.4,295.3 L394.3,293.0 L396.3,290.6 L398.4,288.3 L400.7,286.1 L403.1,283.9 L405.7,281.7 L408.4,279.6 L411.2,277.6 L414.1,275.6 L417.2,273.6 L420.3,271.8 L423.6,270.0 L427.0,268.2 L430.5,266.5 L434.1,264.9 L437.8,263.4 L441.6,261.9 L445.5,260.6 L449.5,259.3 L453.5,258.1 L457.6,256.9 L461.8,255.8 L466.0,254.9 L470.3,254.0 L474.7,253.2 L479.1,252.4 L483.5,251.8 L488.0,251.3 L492.5,250.8 L497.0,250.5 L501.6,250.2 L506.1,250.0 L510.7,249.9 L515.2,249.9 L519.8,250.0 L524.4,250.2 L528.9,250.4 L533.4,250.8 L537.9,251.3 L542.4,251.8 L546.8,252.4 L551.2,253.2 L555.5,253.9 L559.8,254.8 L564.0,255.8 L568.1,256.9 L572.2,258.0 L576.2,259.2 L580.2,260.5 L584.0,261.9 L587.8,263.4 L591.5,264.9 L595.0,266.5 L598.5,268.2 L601.9,269.9 L605.1,271.7 L608.3,273.6 L611.3,275.5 L614.2,277.5 L617.0,279.6 L619.6,281.7 L622.1,283.8 L624.5,286.0 L626.7,288.3 L628.8,290.6 L647.4,312.6 L649.8,315.4 L651.9,318.3 L653.9,321.2 L655.7,324.2 L657.4,327.2 L658.9,330.3 L660.1,333.4 L661.2,336.5 L662.1,339.6 L662.9,342.7 L663.4,345.9 L663.8,349.1 L664.0,352.3 L663.9,355.5 L663.7,358.7 L663.4,361.9 L660.4,383.4 L659.8,386.6 L659.1,389.8 L658.1,393.0 L657.0,396.1 L655.7,399.2 L654.3,402.3 L652.6,405.4 L650.8,408.4 L648.8,411.4 L646.7,414.3 L644.4,417.2 L641.9,420.1 L639.3,422.9 L636.5,425.6 L633.5,428.3 L630.4,430.9 L627.2,433.5 L623.8,435.9 L620.3,438.4 L616.6,440.7 L612.8,443.0 L608.9,445.1 L604.9,447.2 L600.7,449.2 L596.5,451.2 L592.1,453.0 L587.6,454.8 L583.1,456.4 L578.5,457.9 L573.8,459.4 L569.0,460.7 L564.1,462.0 L559.1,463.1 L554.2,464.1 L549.1,465.1 L544.0,465.9 L538.9,466.6 L533.8,467.2 L528.6,467.7 L523.4,468.1 L518.1,468.4 L512.9,468.5 L507.7,468.5 L502.5,468.5 L497.2,468.3 L492.1,468.0 L486.9,467.6 L481.8,467.1 L476.6,466.5 L471.6,465.7 L466.6,464.9 L461.6,463.9 L456.8,462.9 L451.9,461.7 L447.2,460.4 L442.5,459.1 L437.9,457.6 L433.4,456.0 L429.1,454.4 L424.8,452.6 L420.6,450.8 L416.5,448.8 L412.6,446.8 L408.7,444.7 L405.0,442.5 L401.4,440.2 L398.0,437.8 L394.7,435.4 L391.6,432.9 L388.6,430.3 L385.7,427.7 L383.0,425.0 L380.5,422.2 L378.1,419.4 L375.9,416.6 L373.9,413.7 L372.0,410.7 L370.3,407.7 L368.8,404.7 L367.4,401.6 L366.2,398.5 L365.2,395.4 L364.4,392.3 L363.8,389.1 L360.4,364.5 L360.1,361.3Z" fill="#c4c7ca" stroke="#2d4e6c" stroke-width="2"/>
<path d="M360.0,358.1 L360.1,354.9 L360.4,351.7 L360.9,348.5 L361.6,345.4 L362.4,342.2 L363.5,339.0 L364.7,335.9 L366.1,332.8 L367.7,329.7 L369.4,326.7 L371.4,323.7 L373.5,320.7 L392.4,295.3 L394.3,293.0 L396.3,290.6 L398.4,288.3 L400.7,286.1 L403.1,283.9 L405.7,281.7 L408.4,279.6 L411.2,277.6 L414.1,275.6 L417.2,273.6 L420.3,271.8 L423.6,270.0 L427.0,268.2 L430.5,266.5 L434.1,264.9 L437.8,263.4 L441.6,261.9 L445.5,260.6 L449.5,259.3 L453.5,258.1 L457.6,256.9 L461.8,255.8 L466.0,254.9 L470.3,254.0 L474.7,253.2 L479.1,252.4 L483.5,251.8 L488.0,251.3 L492.5,250.8 L497.0,250.5 L501.6,250.2 L506.1,250.0 L510.7,249.9 L515.2,249.9 L519.8,250.0 L524.4,250.2 L528.9,250.4 L533.4,250.8 L537.9,251.3 L542.4,251.8 L546.8,252.4 L551.2,253.2 L555.5,253.9 L559.8,254.8 L564.0,255.8 L568.1,256.9 L572.2,258.0 L576.2,259.2 L580.2,260.5 L584.0,261.9 L587.8,263.4 L591.5,264.9 L595.0,266.5 L598.5,268.2 L601.9,269.9 L605.1,271.7 L608.3,273.6 L611.3,275.5 L614.2,277.5 L617.0,279.6 L619.6,281.7 L622.1,283.8 L624.5,286.0 L626.7,288.3 L628.8,290.6 L647.4,312.6 L649.8,315.4 L651.9,318.3 L653.9,321.2 L655.7,324.2 L657.4,327.2 L658.9,330.3 L660.1,333.4 L661.2,336.5 L662.1,339.6 L662.9,342.7 L663.4,345.9 L663.8,349.1 L664.0,352.3 L663.9,355.5 L663.7,358.7 L663.4,361.9 L662.8,365.1 L662.0,368.2 L661.1,371.4 L659.9,374.5 L658.6,377.6 L657.1,380.7 L655.5,383.8 L653.6,386.8 L651.6,389.8 L649.4,392.8 L647.0,395.6 L644.5,398.5 L641.8,401.3 L638.9,404.1 L635.9,406.7 L632.8,409.4 L629.5,411.9 L626.0,414.4 L622.4,416.8 L618.7,419.2 L614.8,421.4 L610.8,423.6 L606.7,425.7 L602.5,427.7 L598.1,429.6 L593.7,431.5 L589.1,433.2 L584.5,434.9 L579.8,436.4 L575.0,437.9 L570.0,439.2 L565.1,440.4 L560.1,441.6 L555.0,442.6 L549.8,443.6 L544.6,444.4 L539.4,445.1 L534.1,445.7 L528.9,446.2 L523.5,446.6 L518.2,446.8 L512.9,447.0 L507.6,447.1 L502.2,447.0 L496.9,446.8 L491.6,446.5 L486.3,446.1 L481.1,445.6 L475.9,445.0 L470.7,444.2 L465.6,443.4 L460.6,442.5 L455.6,441.4 L450.7,440.2 L445.8,439.0 L441.1,437.6 L436.4,436.1 L431.8,434.6 L427.3,432.9 L423.0,431.2 L418.7,429.3 L414.5,427.4 L410.5,425.3 L406.6,423.2 L402.8,421.0 L399.2,418.8 L395.7,416.4 L392.3,414.0 L389.1,411.5 L386.0,408.9 L383.1,406.3 L380.4,403.6 L377.8,400.8 L375.4,398.0 L373.1,395.1 L371.1,392.2 L369.1,389.3 L367.4,386.3 L365.9,383.3 L364.5,380.2 L363.3,377.1 L362.3,374.0 L361.5,370.8 L360.8,367.7 L360.4,364.5 L360.1,361.3Z" fill="url(#gg)"/>
<path d="M664.0,352.3 L663.9,355.5 L663.7,358.7 L663.3,361.9 L662.8,365.1 L662.0,368.3 L661.0,371.5 L659.9,374.6 L658.6,377.8 L657.0,380.9 L655.4,384.0 L653.5,387.0 L651.4,390.0 L649.2,393.0 L646.8,395.9 L644.3,398.7 L641.5,401.6 L638.7,404.3 L635.6,407.0 L632.4,409.6 L629.1,412.2 L625.6,414.7 L622.0,417.1 L618.2,419.5 L614.3,421.7 L610.2,423.9 L606.1,426.0 L601.8,428.0 L597.4,429.9 L593.0,431.8 L588.4,433.5 L583.7,435.1 L578.9,436.7 L574.0,438.1 L569.1,439.5 L564.1,440.7 L559.0,441.8 L553.9,442.8 L548.7,443.7 L543.5,444.5 L538.2,445.2 L532.9,445.8 L527.6,446.3 L522.3,446.6 L516.9,446.9 L511.5,447.0 L506.2,447.0 L500.8,446.9 L495.5,446.7 L490.2,446.4 L484.9,446.0 L479.6,445.4 L474.4,444.8 L469.2,444.0 L464.1,443.1 L459.0,442.1 L454.0,441.0 L449.1,439.8 L444.3,438.5 L439.5,437.1 L434.8,435.6 L430.3,434.0 L425.8,432.3 L421.4,430.5 L417.2,428.6 L413.1,426.6 L409.0,424.6 L405.2,422.4 L401.4,420.2 L397.8,417.8 L394.3,415.5 L391.0,413.0 L387.8,410.4 L384.8,407.8 L382.0,405.2 L379.3,402.4 L376.8,399.6 L374.4,396.8 L372.2,393.9 L370.2,390.9 L368.3,387.9 L366.7,384.9 L365.2,381.9 L363.9,378.8 L362.8,375.6 L361.9,372.5 L361.1,369.3 L360.6,366.1 L360.2,362.9 L360.0,359.7" fill="none" stroke="#3d5a75" stroke-width="1.2"/>
<ellipse cx="512.2" cy="323.7" rx="130.1" ry="73.8" transform="rotate(-0.30 512.2 323.7)" fill="#f0f1f2" stroke="#2d4e6c" stroke-width="1.4"/>
<ellipse cx="512.0" cy="324.0" rx="122.0" ry="71.0" transform="rotate(0.00 512.0 324.0)" fill="#c2c4c6" stroke="#2d4e6c" stroke-width="1.6"/>
<path d="M390.0,324.0 L390.1,321.5 L390.3,319.0 L390.7,316.5 L391.2,314.0 L391.9,311.5 L392.7,309.1 L393.7,306.6 L394.8,304.2 L396.1,301.8 L397.5,299.5 L399.1,297.1 L400.8,294.8 L402.6,292.6 L404.6,290.3 L406.7,288.1 L408.9,286.0 L411.3,283.9 L413.8,281.9 L416.4,279.9 L419.2,277.9 L422.0,276.1 L425.0,274.2 L428.0,272.5 L431.2,270.8 L434.5,269.2 L437.9,267.6 L441.3,266.1 L444.9,264.7 L448.5,263.4 L452.2,262.1 L456.0,260.9 L459.9,259.8 L463.8,258.8 L467.8,257.8 L471.9,257.0 L475.9,256.2 L480.1,255.5 L484.3,254.9 L488.5,254.3 L492.7,253.9 L497.0,253.5 L501.2,253.3 L505.5,253.1 L509.8,253.0 L514.2,253.0 L518.5,253.1 L522.8,253.3 L527.0,253.5 L531.3,253.9 L535.5,254.3 L539.7,254.9 L543.9,255.5 L548.1,256.2 L552.1,257.0 L556.2,257.8 L560.2,258.8 L564.1,259.8 L568.0,260.9 L571.8,262.1 L575.5,263.4 L579.1,264.7 L582.7,266.1 L586.1,267.6 L589.5,269.2 L592.8,270.8 L596.0,272.5 L599.0,274.2 L602.0,276.1 L604.8,277.9 L607.6,279.9 L610.2,281.9 L612.7,283.9 L615.1,286.0 L617.3,288.1 L619.4,290.3 L621.4,292.6 L623.2,294.8 L624.9,297.1 L626.5,299.5 L627.9,301.8 L629.2,304.2 L630.3,306.6 L631.3,309.1 L632.1,311.5 L632.8,314.0 L633.3,316.5 L633.7,319.0 L633.9,321.5 L634.0,324.0 L634.0,324.0 L633.9,321.9 L633.7,319.7 L633.3,317.6 L632.8,315.5 L632.1,313.4 L631.3,311.3 L630.3,309.2 L629.2,307.1 L627.9,305.1 L626.5,303.1 L624.9,301.1 L623.2,299.1 L621.4,297.2 L619.4,295.3 L617.3,293.4 L615.1,291.6 L612.7,289.8 L610.2,288.0 L607.6,286.3 L604.8,284.7 L602.0,283.1 L599.0,281.5 L596.0,280.0 L592.8,278.6 L589.5,277.2 L586.1,275.9 L582.7,274.6 L579.1,273.4 L575.5,272.2 L571.8,271.2 L568.0,270.2 L564.1,269.2 L560.2,268.3 L556.2,267.5 L552.1,266.8 L548.1,266.1 L543.9,265.5 L539.7,265.0 L535.5,264.5 L531.3,264.2 L527.0,263.9 L522.8,263.6 L518.5,263.5 L514.2,263.4 L509.8,263.4 L505.5,263.5 L501.2,263.6 L497.0,263.9 L492.7,264.2 L488.5,264.5 L484.3,265.0 L480.1,265.5 L475.9,266.1 L471.9,266.8 L467.8,267.5 L463.8,268.3 L459.9,269.2 L456.0,270.2 L452.2,271.2 L448.5,272.2 L444.9,273.4 L441.3,274.6 L437.9,275.9 L434.5,277.2 L431.2,278.6 L428.0,280.0 L425.0,281.5 L422.0,283.1 L419.2,284.7 L416.4,286.3 L413.8,288.0 L411.3,289.8 L408.9,291.6 L406.7,293.4 L404.6,295.3 L402.6,297.2 L400.8,299.1 L399.1,301.1 L397.5,303.1 L396.1,305.1 L394.8,307.1 L393.7,309.2 L392.7,311.3 L391.9,313.4 L391.2,315.5 L390.7,317.6 L390.3,319.7 L390.1,321.9 L390.0,324.0Z" fill="#8f9092"/>
<path d="M390.0,324.0 L390.1,321.9 L390.3,319.7 L390.7,317.6 L391.2,315.5 L391.9,313.4 L392.7,311.3 L393.7,309.2 L394.8,307.1 L396.1,305.1 L397.5,303.1 L399.1,301.1 L400.8,299.1 L402.6,297.2 L404.6,295.3 L406.7,293.4 L408.9,291.6 L411.3,289.8 L413.8,288.0 L416.4,286.3 L419.2,284.7 L422.0,283.1 L425.0,281.5 L428.0,280.0 L431.2,278.6 L434.5,277.2 L437.9,275.9 L441.3,274.6 L444.9,273.4 L448.5,272.2 L452.2,271.2 L456.0,270.2 L459.9,269.2 L463.8,268.3 L467.8,267.5 L471.9,266.8 L475.9,266.1 L480.1,265.5 L484.3,265.0 L488.5,264.5 L492.7,264.2 L497.0,263.9 L501.2,263.6 L505.5,263.5 L509.8,263.4 L514.2,263.4 L518.5,263.5 L522.8,263.6 L527.0,263.9 L531.3,264.2 L535.5,264.5 L539.7,265.0 L543.9,265.5 L548.1,266.1 L552.1,266.8 L556.2,267.5 L560.2,268.3 L564.1,269.2 L568.0,270.2 L571.8,271.2 L575.5,272.2 L579.1,273.4 L582.7,274.6 L586.1,275.9 L589.5,277.2 L592.8,278.6 L596.0,280.0 L599.0,281.5 L602.0,283.1 L604.8,284.7 L607.6,286.3 L610.2,288.0 L612.7,289.8 L615.1,291.6 L617.3,293.4 L619.4,295.3 L621.4,297.2 L623.2,299.1 L624.9,301.1 L626.5,303.1 L627.9,305.1 L629.2,307.1 L630.3,309.2 L631.3,311.3 L632.1,313.4 L632.8,315.5 L633.3,317.6 L633.7,319.7 L633.9,321.9 L634.0,324.0" fill="none" stroke="#2d4e6c" stroke-width="1.1"/>
<g clip-path="url(#gr_r1c)"><path d="M385.1,341.6 L385.2,339.5 L385.4,337.3 L385.7,335.2 L386.2,333.1 L386.9,331.0 L387.7,328.9 L388.7,326.8 L389.8,324.7 L391.1,322.7 L392.6,320.7 L394.1,318.7 L395.8,316.7 L397.7,314.7 L399.7,312.8 L401.9,310.9 L404.1,309.1 L406.6,307.3 L409.1,305.5 L411.8,303.8 L414.6,302.1 L417.5,300.5 L420.5,298.9 L423.6,297.3 L426.9,295.9 L430.2,294.4 L433.7,293.1 L437.2,291.7 L440.9,290.5 L444.6,289.3 L448.4,288.2 L452.3,287.1 L456.3,286.1 L460.3,285.2 L464.4,284.3 L468.5,283.5 L472.7,282.8 L477.0,282.1 L481.3,281.6 L485.6,281.0 L490.0,280.6 L494.3,280.2 L498.8,280.0 L503.2,279.7 L507.6,279.6 L512.0,279.5 L516.5,279.5 L520.9,279.6 L525.3,279.8 L529.7,280.0 L534.1,280.3 L538.4,280.7 L542.7,281.2 L547.0,281.7 L551.2,282.3 L555.4,283.0 L559.5,283.7 L563.5,284.5 L567.5,285.4 L571.4,286.4 L575.3,287.4 L579.0,288.5 L582.7,289.6 L586.3,290.8 L589.8,292.1 L593.2,293.4 L596.5,294.8 L599.7,296.3 L602.7,297.7 L605.7,299.3 L608.5,300.9 L611.3,302.5 L613.8,304.2 L616.3,306.0 L618.6,307.8 L620.8,309.6 L622.9,311.4 L624.8,313.3 L626.6,315.3 L628.2,317.2 L629.7,319.2 L631.1,321.2 L632.3,323.2 L633.3,325.3 L634.2,327.4 L634.9,329.5 L635.5,331.6 L635.9,333.7 L636.2,335.8 L636.3,337.9" fill="none" stroke="#2d4e6c" stroke-width="1.5"/><path d="M385.1,338.4 L385.2,336.3 L385.4,334.1 L385.7,332.0 L386.2,329.9 L386.9,327.8 L387.7,325.7 L388.7,323.6 L389.8,321.5 L391.1,319.5 L392.6,317.5 L394.1,315.5 L395.8,313.5 L397.7,311.5 L399.7,309.6 L401.9,307.7 L404.1,305.9 L406.6,304.1 L409.1,302.3 L411.8,300.6 L414.6,298.9 L417.5,297.3 L420.5,295.7 L423.6,294.1 L426.9,292.7 L430.2,291.2 L433.7,289.9 L437.2,288.5 L440.9,287.3 L444.6,286.1 L448.4,285.0 L452.3,283.9 L456.3,282.9 L460.3,282.0 L464.4,281.1 L468.5,280.3 L472.7,279.6 L477.0,278.9 L481.3,278.4 L485.6,277.8 L490.0,277.4 L494.3,277.0 L498.8,276.8 L503.2,276.5 L507.6,276.4 L512.0,276.3 L516.5,276.3 L520.9,276.4 L525.3,276.6 L529.7,276.8 L534.1,277.1 L538.4,277.5 L542.7,278.0 L547.0,278.5 L551.2,279.1 L555.4,279.8 L559.5,280.5 L563.5,281.3 L567.5,282.2 L571.4,283.2 L575.3,284.2 L579.0,285.3 L582.7,286.4 L586.3,287.6 L589.8,288.9 L593.2,290.2 L596.5,291.6 L599.7,293.1 L602.7,294.5 L605.7,296.1 L608.5,297.7 L611.3,299.3 L613.8,301.0 L616.3,302.8 L618.6,304.6 L620.8,306.4 L622.9,308.2 L624.8,310.1 L626.6,312.1 L628.2,314.0 L629.7,316.0 L631.1,318.0 L632.3,320.0 L633.3,322.1 L634.2,324.2 L634.9,326.3 L635.5,328.4 L635.9,330.5 L636.2,332.6 L636.3,334.7" fill="none" stroke="#2d4e6c" stroke-width="1.3"/></g>
<path d="M660.1,384.7 L658.0,391.0 M650.9,404.7 L646.6,410.5 M634.6,423.0 L628.3,428.2 M612.1,438.8 L604.0,442.9 M584.4,451.1 L575.0,454.1 M553.0,459.4 L542.8,461.1 M519.5,463.3 L509.0,463.5 M485.6,462.5 L475.3,461.3 M453.0,457.1 L443.6,454.5 M423.5,447.4 L415.3,443.6 M398.6,433.8 L392.0,428.9 M379.4,417.1 L374.8,411.4 M367.0,398.1 L364.7,391.9" stroke="#2d4e6c" stroke-width="1.6"/>
</g>
<path d="M634.0,324.0 L633.9,326.5 L633.7,329.0 L633.3,331.5 L632.8,334.0 L632.1,336.5 L631.3,338.9 L630.3,341.4 L629.2,343.8 L627.9,346.2 L626.5,348.5 L624.9,350.9 L623.2,353.2 L621.4,355.4 L619.4,357.7 L617.3,359.9 L615.1,362.0 L612.7,364.1 L610.2,366.1 L607.6,368.1 L604.8,370.1 L602.0,371.9 L599.0,373.8 L596.0,375.5 L592.8,377.2 L589.5,378.8 L586.1,380.4 L582.7,381.9 L579.1,383.3 L575.5,384.6 L571.8,385.9 L568.0,387.1 L564.1,388.2 L560.2,389.2 L556.2,390.2 L552.1,391.0 L548.1,391.8 L543.9,392.5 L539.7,393.1 L535.5,393.7 L531.3,394.1 L527.0,394.5 L522.8,394.7 L518.5,394.9 L514.2,395.0 L509.8,395.0 L505.5,394.9 L501.2,394.7 L497.0,394.5 L492.7,394.1 L488.5,393.7 L484.3,393.1 L480.1,392.5 L475.9,391.8 L471.9,391.0 L467.8,390.2 L463.8,389.2 L459.9,388.2 L456.0,387.1 L452.2,385.9 L448.5,384.6 L444.9,383.3 L441.3,381.9 L437.9,380.4 L434.5,378.8 L431.2,377.2 L428.0,375.5 L425.0,373.8 L422.0,371.9 L419.2,370.1 L416.4,368.1 L413.8,366.1 L411.3,364.1 L408.9,362.0 L406.7,359.9 L404.6,357.7 L402.6,355.4 L400.8,353.2 L399.1,350.9 L397.5,348.5 L396.1,346.2 L394.8,343.8 L393.7,341.4 L392.7,338.9 L391.9,336.5 L391.2,334.0 L390.7,331.5 L390.3,329.0 L390.1,326.5 L390.0,324.0" fill="none" stroke="#2d4e6c" stroke-width="1.7"/></g></svg><!--/scene-->
<!-- nav buttons -->
<svg class="abs" style="left:0;top:96px" width="80" height="380" viewBox="0 96 80 380">
 <g fill="#fdfdfd" stroke="#e6e6e6" stroke-width="2">
  <circle cx="35.7" cy="231.6" r="23"/>
  <circle cx="35.7" cy="284" r="23"/>
  <circle cx="35.7" cy="336.5" r="23"/>
  <circle cx="35.7" cy="389" r="23"/>
  <circle cx="35.7" cy="441.6" r="23"/>
 </g>
 <path d="M35.7,222.3 L45.5,232 L42.5,232 V241.3 H38.6 V235.5 H32.8 V241.3 H28.9 V232 H25.9 Z" fill="#a8d4f5" stroke="#111" stroke-width="1.6" stroke-linejoin="round"/>
 <path d="M35.7,277 L42.5,284 L35.7,291 L28.9,284 Z" fill="#a8d4f5" stroke="#2f4458" stroke-width="1.5" stroke-linejoin="round"/>
 <g fill="none" stroke="#2f4458" stroke-width="1.8">
  <path d="M24.5,278.5 V274.3 H28.8 M42.6,274.3 H46.9 V278.5 M46.9,289.5 V293.7 H42.6 M28.8,293.7 H24.5 V289.5"/>
 </g>
 <path d="M27,336.5 H44.4 M35.7,327.8 V345.2" stroke="#111" stroke-width="2.2"/>
 <path d="M26.8,389 H44.6" stroke="#111" stroke-width="2.3"/>
 <g stroke="#2f4458" stroke-width="1.7" stroke-linejoin="round">
  <path d="M29.5,435.5 L35.7,432.3 L41.9,435.5 L35.7,438.7 Z" fill="#fff"/>
  <path d="M29.5,435.5 V443.3 L35.7,447 V438.7 Z" fill="#fff"/>
  <path d="M41.9,435.5 V443.3 L35.7,447 V438.7 Z" fill="#a8d4f5"/>
  <path d="M25.5,441 L35.7,447.5 L45.9,441" fill="none"/>
 </g>
</svg>
<!-- view cube -->
<svg class="abs" style="left:0;top:96px" width="120" height="120" viewBox="0 96 120 120">
 <g stroke="#c6c6c6" stroke-width="1.1" stroke-linejoin="round">
  <path d="M28.1,128.5 L71.3,117.6 L100.8,138.6 L50.3,154.6 Z" fill="#fbfbfb"/>
  <path d="M28.1,128.5 L50.3,154.6 L52.8,199.2 L30.5,166.5 Z" fill="#f4f4f4"/>
  <path d="M50.3,154.6 L100.8,138.6 L94,182.3 L52.8,199.2 Z" fill="#f7f7f7"/>
 </g>
 <path d="M52.8,199.2 L94,182.3 L94,184.5 L53,201.5 Z" fill="#d8d8d8"/>
 <text font-family="Liberation Sans" font-weight="bold" font-size="10.5" fill="#adb2b7" transform="translate(56.5,180.5) rotate(-21) skewX(-6) scale(1,1.05)" textLength="39" lengthAdjust="spacingAndGlyphs">DIREITA</text>
 <text font-family="Liberation Sans" font-size="8.5" fill="#959ba1" transform="translate(48,124) rotate(40) skewX(-25)" textLength="37" lengthAdjust="spacingAndGlyphs">SUPERIOR</text>
 <text font-family="Liberation Sans" font-size="7" fill="#a3a8ad" transform="translate(30.5,148.5) rotate(63) skewX(-20)" textLength="31" lengthAdjust="spacingAndGlyphs">FRONTAL</text>
</svg>
<!-- right tab -->
<div class="abs" style="left:1020px;top:96px;width:4px;height:469px;background:#f0f0f1"></div>
<div class="abs" style="left:1011px;top:312px;width:14px;height:43px;background:#f0f0f2;border:1px solid #dde2e8;border-right:none"></div>
<svg class="abs" style="left:1011px;top:312px" width="13" height="43" viewBox="1011 312 13 43"><path d="M1016.8,323 L1021,333.5 L1016.8,344" fill="none" stroke="#1c2424" stroke-width="2"/></svg>
<!-- bottom right -->
<div class="abs" style="left:909.5px;top:510.5px;width:101px;height:20px;background:#fcfcfc;border:1px solid #e4e7ea;border-radius:2px"></div>
<div class="abs" style="left:922px;top:512px;font-size:12px;color:#8a959f;letter-spacing:-0.2px;white-space:nowrap">Configurações</div>
<div class="abs" style="left:848px;top:542.5px;font-size:12px;color:#5b6671;letter-spacing:-0.2px;white-space:nowrap">Ajustar Grade</div>
<div class="abs" style="left:926.5px;top:541px;width:84px;height:19.5px;background:#fdfdfd;border:1px solid #e1e4e8;border-radius:2px"></div>
<div class="abs" style="left:934px;top:542.5px;font-size:12px;color:#7a848e;letter-spacing:-0.1px;white-space:nowrap">1,0 mm</div>
<svg class="abs" style="left:990px;top:545px" width="16" height="12"><path d="M6.3,8 L9,4.4 L11.8,8 Z" fill="#222"/></svg>
<!-- toast -->
<div class="abs" style="left:10px;top:529px;width:328px;height:35px;background:#fd5224;border:2px solid #5c7fc1;border-radius:18px"></div>
<div class="abs" style="left:24.5px;top:538.5px;font-size:14px;color:#ffeee8;letter-spacing:-0.13px;white-space:nowrap">Your session has expired. Please login again.</div>
<svg class="abs" style="left:312px;top:539px" width="18" height="18" viewBox="312 539 18 18"><path d="M316.2,543.3 L326.4,553.2 M326.4,543.3 L316.2,553.2" stroke="#ffe6dc" stroke-width="2.6"/></svg>
<div class="dv" style="left:184px"></div>
<div class="dv" style="left:275px"></div>
<div class="dv" style="left:581px"></div>
<div class="dv" style="left:650px"></div>
<div class="dv" style="left:786px"></div>
<div class="dv" style="left:923px"></div>
<div class="dv" style="left:1014px"></div>


<svg class="abs" style="left:0;top:0" width="1024" height="96" viewBox="0 0 1024 96">
 <g fill="none" stroke="#cdd6de" stroke-width="1.4">
  <path d="M20.9,67.9 V62.4 H31.7 V67.9"/><path d="M15.3,62.4 V78.3 H20.9"/>
  <rect x="20.9" y="67.9" width="16.6" height="16.4"/>
 </g>
 <g fill="none" stroke="#374141" stroke-width="1.7">
  <path d="M64,64.3 H60.6 V84.2 H75.4 V80.8"/><path d="M71.6,64.3 H75.4 V70.2"/>
  <rect x="69.5" y="70.4" width="10.6" height="10.3" stroke="#5a6363" fill="#f0f0f2"/>
 </g>
 <path d="M63.6,67.6 L64.8,64.2 H66 A1.9,1.9 0 0 1 69.6,64.2 H70.8 L72,67.6 Z" fill="#2f3a3a"/>
 <circle cx="67.8" cy="64.4" r="0.9" fill="#f0f0f2"/>
 <g stroke="#c7d1db" fill="#f0f0f2">
  <rect x="105.5" y="69.5" width="14" height="14" stroke-width="1.3" transform="rotate(-9 112.5 76.5)"/>
  <rect x="108.5" y="66.5" width="14.5" height="14.5" stroke-width="1.5" transform="rotate(-4 115.7 73.7)"/>
  <rect x="113.2" y="63" width="14.6" height="14.6" stroke-width="2.2"/>
 </g>
 <g fill="none" stroke="#c7d1db" stroke-width="1.9">
  <path d="M151.3,64.3 H171.5"/>
  <path d="M158.3,64 V62.3 A3.4,2.4 0 0 1 165,62.3 V64"/>
  <path d="M153.5,66.7 V82 Q153.5,85.4 157,85.4 H166.5 Q170,85.4 170,82 V66.7"/>
  <path d="M157.6,67 V79 M161.6,67 V79 M165.7,67 V79" stroke-width="1.2"/>
 </g>
 <path d="M198.2,72.5 L206.8,66.8 V70.4 C212.5,70.2 217.8,71.6 217.7,78.8 C215.5,75.2 212,74.4 206.8,74.4 V78.7 Z" fill="#243131"/>
 <path d="M262.1,72.5 L253.5,66.8 V70.4 C247.8,70.2 242.5,71.6 242.6,78.8 C244.8,75.2 248.3,74.4 253.5,74.4 V78.7 Z" fill="#c7d1db"/>
 <g fill="none" stroke="#c8d2dc" stroke-width="2">
  <path d="M598.6,79 V76.5 C598.6,73.5 594,70.6 594,69.8 A8.2,8.2 0 1 1 610.4,69.8 C610.4,70.6 605.6,73.5 605.6,76.5 V79"/>
  <path d="M598,80.9 H606.2 M598.5,83.5 H605.6" stroke-width="1.6"/>
  <path d="M600,86.1 H604.2" stroke-width="1.4"/>
  <path d="M597.5,65.5 A5,5 0 0 1 600,63.2" stroke-width="1.1"/>
 </g>
 <rect x="622" y="62" width="1.2" height="22" fill="#d6dde3"/>
 <path d="M631.4,69.8 H640.6 L636,75.2 Z" fill="#243030"/>
 <g fill="#c5d0da">
  <rect x="660.5" y="60.4" width="2.2" height="2.2"/><rect x="684.5" y="60.4" width="2.2" height="2.2"/>
  <rect x="660.5" y="84" width="2.2" height="2.2"/><rect x="684.5" y="84" width="2.2" height="2.2"/>
  <rect x="665.4" y="60.4" width="16.3" height="1.8"/><rect x="665.4" y="84.2" width="16.3" height="1.8"/>
  <rect x="660.7" y="65.2" width="1.8" height="16"/><rect x="684.7" y="65.2" width="1.8" height="16"/>
  <rect x="664.3" y="64.9" width="10.7" height="10.5"/>
 </g>
 <circle cx="677.6" cy="75.4" r="5.6" fill="#f0f0f2" stroke="#c5d0da" stroke-width="2"/>
 <g fill="#c5d0da">
  <rect x="707.4" y="62" width="15.7" height="15.9"/>
  <circle cx="721.8" cy="75.6" r="8.9"/>
  <rect x="751.4" y="61.1" width="11.4" height="10.7"/>
 </g>
 <circle cx="770.5" cy="79.8" r="5.5" fill="none" stroke="#c5d0da" stroke-width="2"/>
 <g stroke="#c5d0da" stroke-width="1.8" stroke-linecap="round">
  <path d="M766.5,61.5 L765.8,64.5 M771.5,64 L769.5,66.5 M774.5,69.5 L772,70.5 M751.5,76 L755,75 M753.5,81.5 L756,79.5 M757.5,85.5 L758.5,83"/>
 </g>
 <g fill="none" stroke="#c5d0da" stroke-width="2">
  <path d="M801.6,61 V85.2"/>
  <rect x="807" y="65" width="12.3" height="6.2"/>
  <rect x="807" y="75" width="8" height="6.5" fill="#d5dde4"/>
 </g>
 <g fill="none" stroke="#c5d0da" stroke-width="1.6">
  <path d="M841.2,81.7 L851.2,64.7 V81.7 Z"/>
  <path d="M858.8,64.7 V81.7 H868.4 Z" stroke-width="2.2"/>
 </g>
 <rect x="853.9" y="59.4" width="2.3" height="28" fill="#c5d0da"/>
 <g transform="translate(897.5,69.5) rotate(-22)" fill="none" stroke="#c5d0da" stroke-width="1.7" stroke-linejoin="round">
  <path d="M-8.2,9.5 V0 A8.2,8.2 0 0 1 8.2,0 V9.5 H4 V0 A4,4 0 0 0 -4,0 V9.5 Z"/>
  <path d="M-8.2,5.3 H-4 M4,5.3 H8.2"/>
 </g>
 <g fill="#c5d0da">
  <circle cx="887.5" cy="83.2" r="1"/><circle cx="891.2" cy="85.7" r="1"/><circle cx="895.4" cy="85.3" r="1"/><circle cx="899.5" cy="83.6" r="1"/><circle cx="904.1" cy="81.6" r="1"/><circle cx="908.6" cy="82.4" r="1"/><circle cx="912" cy="84.2" r="1"/>
 </g>
 <g fill="none" stroke="#c5d0da" stroke-width="1.7" stroke-linejoin="round">
  <path d="M935.2,75.3 L951.4,66.6 L958.9,72.8 L937.7,85.7 Z" fill="#f0f0f2"/>
  <path d="M936.4,80.5 L955,70 M940,77 L942,83 M944.5,74.5 L946.7,80.3 M949.2,72 L951.4,77.5"/>
  <path d="M934.8,67.9 L944.3,61.6 L949.3,70.8 L941,77 Z" fill="#f0f0f2"/>
 </g>
 <g fill="none" stroke="#c5d0da" stroke-width="1.8" stroke-linejoin="round">
  <path d="M990.7,62 V69.5 M987.5,66.5 L990.7,69.7 L993.9,66.5"/>
  <path d="M986,70.5 H984.5 V77.5 M995.5,70.5 H997 V77.5"/>
  <path d="M983,74.3 L980.5,84 H1002 L999.5,74.3"/>
  <path d="M981.5,79.8 H1001 M986,80 V84 M990.7,80 V84 M995.5,80 V84"/>
 </g>
</svg>
</body></html>
